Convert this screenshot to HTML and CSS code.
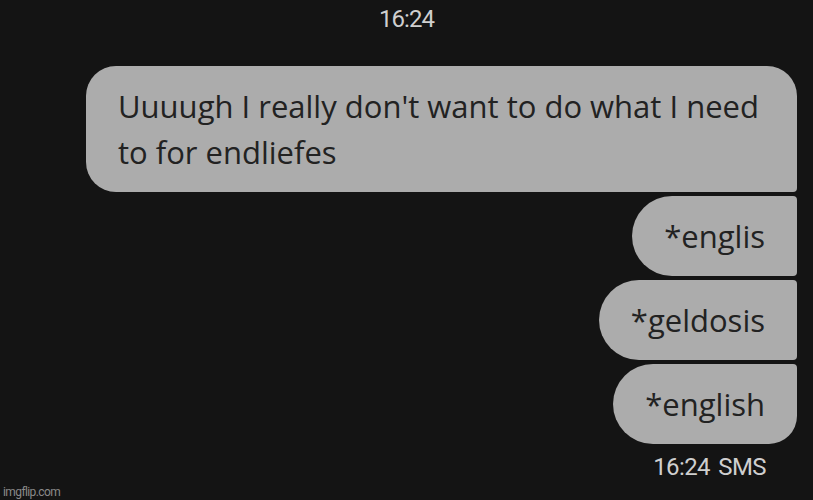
FILE: index.html
```html
<!DOCTYPE html>
<html lang="en">
<head>
    <meta charset="UTF-8">
    <title>Messages</title>
    <link rel="stylesheet" href="styles.css">
</head>
<body>
    <div class="chat">
        <div class="stamp">16:24</div>
        <div class="thread">
            <div class="bubble first">Uuuugh I really don't want to do what I need to for endliefes</div>
            <div class="bubble">*englis</div>
            <div class="bubble">*geldosis</div>
            <div class="bubble last">*english</div>
        </div>
        <div class="meta">16:24 SMS</div>
    </div>
    <div class="watermark">imgflip.com</div>
</body>
</html>
```

FILE: styles.css
```css
* {
    margin: 0;
    padding: 0;
    box-sizing: border-box;
}

html, body {
    height: 100%;
}

body {
    background-color: #141414;
    font-family: 'Open Sans', 'Liberation Sans', sans-serif;
    position: relative;
    overflow: hidden;
}

.chat {
    padding-top: 5px;
}

.stamp {
    font-family: 'Roboto', 'Liberation Sans', sans-serif;
    text-align: center;
    color: #cfcfcf;
    font-size: 24px;
    letter-spacing: -1px;
    line-height: 28px;
    margin-bottom: 33px;
}

.thread {
    display: flex;
    flex-direction: column;
    align-items: flex-end;
    gap: 4px;
    padding-right: 16px;
}

.bubble {
    background-color: #acacac;
    color: #222;
    font-size: 31px;
    line-height: 46px;
    padding: 17px 32px;
    border-radius: 40px 4px 4px 40px;
}

.bubble.first {
    width: 711px;
    border-radius: 30px 30px 4px 30px;
}

.bubble.last {
    border-radius: 40px 4px 28px 40px;
}

.meta {
    font-family: 'Roboto', 'Liberation Sans', sans-serif;
    text-align: right;
    color: #cfcfcf;
    font-size: 24px;
    letter-spacing: -0.6px;
    word-spacing: 3px;
    margin-top: 9px;
    padding-right: 47px;
}

.watermark {
    position: absolute;
    left: 3px;
    bottom: 1px;
    font-family: 'Roboto', 'Liberation Sans', sans-serif;
    color: #8a8a8a;
    font-size: 12px;
    letter-spacing: -0.6px;
}
```
